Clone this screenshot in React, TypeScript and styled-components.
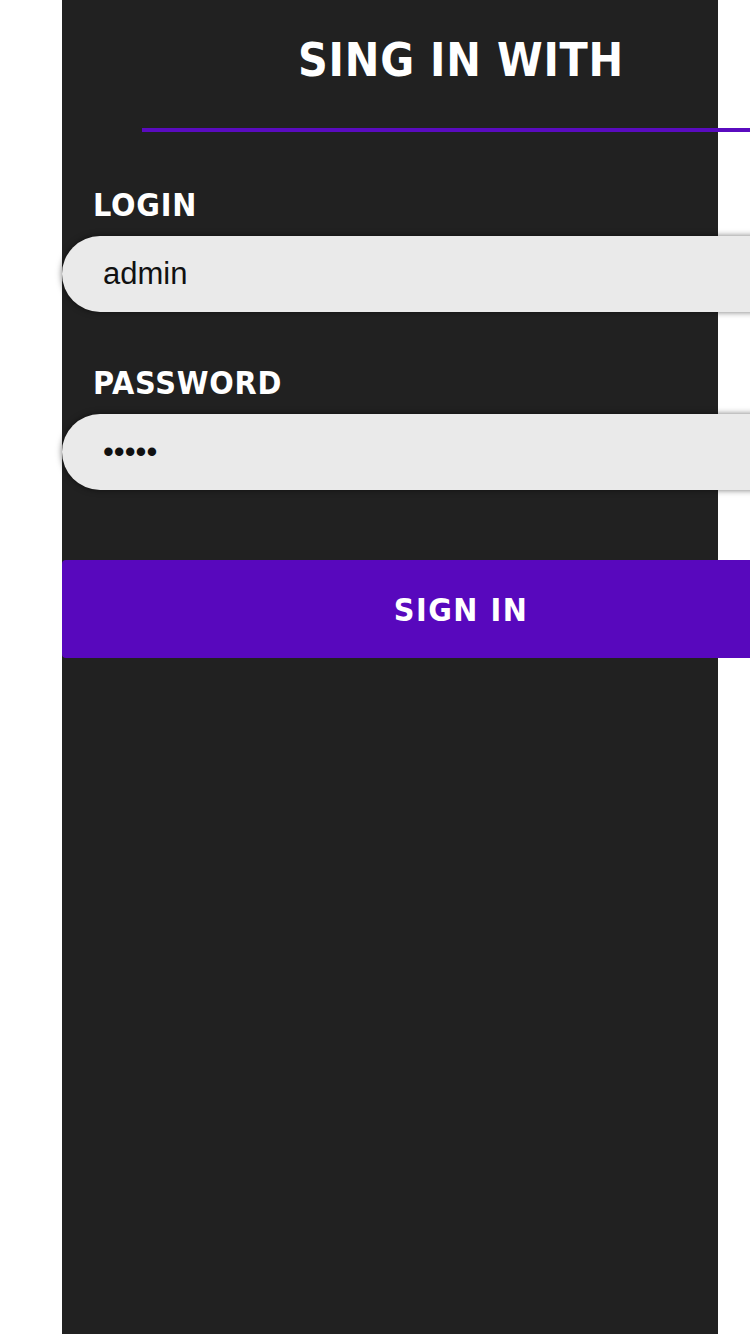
import React, { useState } from 'react';
import styled, { createGlobalStyle } from 'styled-components';

const GlobalStyle = createGlobalStyle`
  html, body {
    margin: 0;
    padding: 0;
    background: #ffffff;
    overflow-x: hidden;
  }
  * {
    box-sizing: border-box;
  }
`;

const HeadFont = `"DejaVu Sans Condensed", "DejaVu Sans", Verdana, sans-serif`;

const Page = styled.main`
  display: flex;
  min-height: 1334px;
  padding-left: 62px;
`;

const Panel = styled.section`
  width: 656px;
  min-height: 1334px;
  background-color: #212121;
  overflow: visible;
`;

const Form = styled.form`
  width: 798px;
  display: flex;
  flex-direction: column;
  font-family: ${HeadFont};
  font-stretch: condensed;
`;

const Title = styled.h2`
  margin: 37px 0 0;
  font-size: 46px;
  line-height: 1;
  font-weight: 700;
  letter-spacing: 0.8px;
  color: #ffffff;
  text-align: center;
`;

const Divider = styled.hr`
  margin: 45px 0 0 10%;
  width: 90%;
  height: 4px;
  border: none;
  background-color: #5a0bbf;
`;

const Field = styled.label<{ $gap: number }>`
  display: flex;
  flex-direction: column;
  gap: 15px;
  margin-top: ${p => p.$gap}px;
`;

const FieldName = styled.span`
  padding-left: 31px;
  font-size: 32px;
  line-height: 1;
  font-weight: 700;
  letter-spacing: 0.8px;
  color: #ffffff;
`;

const Input = styled.input`
  width: 100%;
  height: 76px;
  padding: 0 0 0 41px;
  border: none;
  border-radius: 38px 0 0 38px;
  background-color: #eaeaea;
  box-shadow: 0 0 6px rgba(0, 0, 0, 0.55);
  font-family: "Liberation Sans", Arial, sans-serif;
  font-size: 31px;
  color: #111111;
  outline: none;
`;

const SubmitButton = styled.button`
  margin-top: 70px;
  width: 100%;
  height: 98px;
  padding-top: 3px;
  border: none;
  border-radius: 4px 0 0 4px;
  background-color: #5808bd;
  color: #ffffff;
  font-family: ${HeadFont};
  font-stretch: condensed;
  font-size: 32px;
  font-weight: 700;
  letter-spacing: 1.5px;
  display: flex;
  align-items: center;
  justify-content: center;
  cursor: pointer;
`;

export default function App() {
  const [login, setLogin] = useState('admin');
  const [password, setPassword] = useState('admin');

  return (
    <>
      <GlobalStyle />
      <Page>
        <Panel>
          <Form onSubmit={e => e.preventDefault()}>
            <Title>SING IN WITH</Title>
            <Divider />
            <Field $gap={57}>
              <FieldName>LOGIN</FieldName>
              <Input type="text" value={login} onChange={e => setLogin(e.target.value)} />
            </Field>
            <Field $gap={55}>
              <FieldName>PASSWORD</FieldName>
              <Input type="password" value={password} onChange={e => setPassword(e.target.value)} />
            </Field>
            <SubmitButton type="submit">SIGN IN</SubmitButton>
          </Form>
        </Panel>
      </Page>
    </>
  );
}
